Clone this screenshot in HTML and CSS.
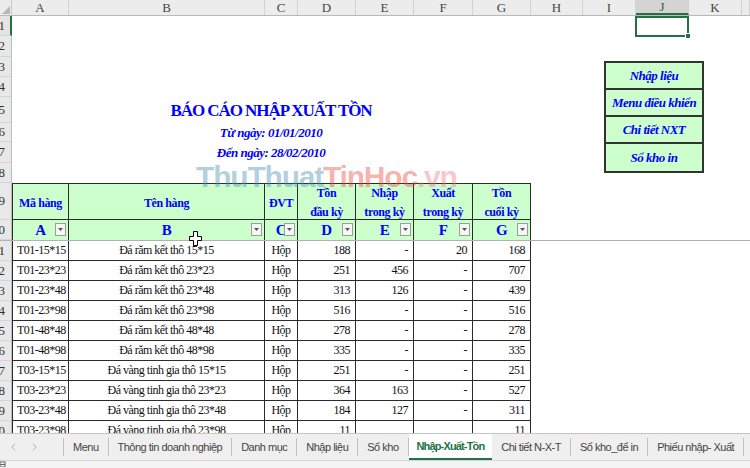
FILE: index.html
```html
<!DOCTYPE html>
<html lang="vi">
<head>
<meta charset="utf-8">
<title>Nhập-Xuất-Tồn</title>
<link rel="stylesheet" href="styles.css">
</head>
<body>
<div class="app">
  <div class="colhdr">
    <div class="corner"><svg width="8" height="8" viewBox="0 0 8 8"><polygon points="8,0 8,8 0,8" fill="#b5b5b5"/></svg></div>
    <div class="ch">A</div><div class="ch">B</div><div class="ch">C</div><div class="ch">D</div><div class="ch">E</div><div class="ch">F</div><div class="ch">G</div><div class="ch">H</div><div class="ch">I</div><div class="ch on">J</div><div class="ch">K</div><div class="ch"></div>
  </div>

  <div class="sheet">
    <div class="row h20"><div class="rh cur"><span>1</span></div><div class="selcell"><span class="handle"></span></div></div>
    <div class="row h21"><div class="rh"><span>2</span></div></div>
    <div class="row h20"><div class="rh"><span>3</span></div></div>
    <div class="row h20"><div class="rh"><span>4</span></div></div>
    <div class="row h26"><div class="rh"><span>5</span></div><div class="title">BÁO CÁO NHẬP XUẤT TỒN</div></div>
    <div class="row h19"><div class="rh"><span>6</span></div><div class="date">Từ ngày: 01/01/2010</div></div>
    <div class="row h21"><div class="rh"><span>7</span></div><div class="date">Đến ngày: 28/02/2010</div></div>
    <div class="row h20"><div class="rh"><span>8</span></div></div>

    <div class="row h37">
      <div class="rh"><span>9</span></div>
      <div class="td th first">Mã hàng</div>
      <div class="td th">Tên hàng</div>
      <div class="td th">ĐVT</div>
      <div class="td th"><span class="ln">Tồn</span><span class="ln">đầu kỳ</span></div>
      <div class="td th"><span class="ln">Nhập</span><span class="ln">trong kỳ</span></div>
      <div class="td th"><span class="ln">Xuất</span><span class="ln">trong kỳ</span></div>
      <div class="td th"><span class="ln">Tồn</span><span class="ln">cuối kỳ</span></div>
    </div>

    <div class="row h21 freeze">
      <div class="rh"><span>10</span></div>
      <div class="td tf first">A<span class="fb"><svg width="5" height="3" viewBox="0 0 5 3"><polygon points="0,0 5,0 2.5,3" fill="#555"/></svg></span></div>
      <div class="td tf">B<span class="fb"><svg width="5" height="3" viewBox="0 0 5 3"><polygon points="0,0 5,0 2.5,3" fill="#555"/></svg></span></div>
      <div class="td tf">C<span class="fb"><svg width="5" height="3" viewBox="0 0 5 3"><polygon points="0,0 5,0 2.5,3" fill="#555"/></svg></span></div>
      <div class="td tf">D<span class="fb"><svg width="5" height="3" viewBox="0 0 5 3"><polygon points="0,0 5,0 2.5,3" fill="#555"/></svg></span></div>
      <div class="td tf">E<span class="fb"><svg width="5" height="3" viewBox="0 0 5 3"><polygon points="0,0 5,0 2.5,3" fill="#555"/></svg></span></div>
      <div class="td tf">F<span class="fb"><svg width="5" height="3" viewBox="0 0 5 3"><polygon points="0,0 5,0 2.5,3" fill="#555"/></svg></span></div>
      <div class="td tf">G<span class="fb"><svg width="5" height="3" viewBox="0 0 5 3"><polygon points="0,0 5,0 2.5,3" fill="#555"/></svg></span></div>
    </div>

    <div class="row h20"><div class="rh"><span>11</span></div><div class="td first l">T01-15*15</div><div class="td c">Đá răm kết thô 15*15</div><div class="td c">Hộp</div><div class="td r">188</div><div class="td r">-</div><div class="td r">20</div><div class="td r">168</div></div>
    <div class="row h20"><div class="rh"><span>12</span></div><div class="td first l">T01-23*23</div><div class="td c">Đá răm kết thô 23*23</div><div class="td c">Hộp</div><div class="td r">251</div><div class="td r">456</div><div class="td r">-</div><div class="td r">707</div></div>
    <div class="row h20"><div class="rh"><span>13</span></div><div class="td first l">T01-23*48</div><div class="td c">Đá răm kết thô 23*48</div><div class="td c">Hộp</div><div class="td r">313</div><div class="td r">126</div><div class="td r">-</div><div class="td r">439</div></div>
    <div class="row h20"><div class="rh"><span>14</span></div><div class="td first l">T01-23*98</div><div class="td c">Đá răm kết thô 23*98</div><div class="td c">Hộp</div><div class="td r">516</div><div class="td r">-</div><div class="td r">-</div><div class="td r">516</div></div>
    <div class="row h20"><div class="rh"><span>15</span></div><div class="td first l">T01-48*48</div><div class="td c">Đá răm kết thô 48*48</div><div class="td c">Hộp</div><div class="td r">278</div><div class="td r">-</div><div class="td r">-</div><div class="td r">278</div></div>
    <div class="row h20"><div class="rh"><span>16</span></div><div class="td first l">T01-48*98</div><div class="td c">Đá răm kết thô 48*98</div><div class="td c">Hộp</div><div class="td r">335</div><div class="td r">-</div><div class="td r">-</div><div class="td r">335</div></div>
    <div class="row h20"><div class="rh"><span>17</span></div><div class="td first l">T03-15*15</div><div class="td c">Đá vàng tinh gia thô 15*15</div><div class="td c">Hộp</div><div class="td r">251</div><div class="td r">-</div><div class="td r">-</div><div class="td r">251</div></div>
    <div class="row h20"><div class="rh"><span>18</span></div><div class="td first l">T03-23*23</div><div class="td c">Đá vàng tinh gia thô 23*23</div><div class="td c">Hộp</div><div class="td r">364</div><div class="td r">163</div><div class="td r">-</div><div class="td r">527</div></div>
    <div class="row h20"><div class="rh"><span>19</span></div><div class="td first l">T03-23*48</div><div class="td c">Đá vàng tinh gia thô 23*48</div><div class="td c">Hộp</div><div class="td r">184</div><div class="td r">127</div><div class="td r">-</div><div class="td r">311</div></div>
    <div class="row h20"><div class="rh"><span>20</span></div><div class="td first l">T03-23*98</div><div class="td c">Đá vàng tinh gia thô 23*98</div><div class="td c">Hộp</div><div class="td r">11</div><div class="td r"></div><div class="td r"></div><div class="td r">11</div></div>
  </div>

  <div class="tabbar">
    <div class="nav">
      <svg width="5" height="8" viewBox="0 0 5 8"><polyline points="4,0.5 1,4 4,7.5" fill="none" stroke="#b3b3b3" stroke-width="1"/></svg>
      <svg width="5" height="8" viewBox="0 0 5 8"><polyline points="1,0.5 4,4 1,7.5" fill="none" stroke="#b3b3b3" stroke-width="1"/></svg>
    </div>
    <span class="sep"></span>
    <div class="tab">Menu</div><span class="sep"></span>
    <div class="tab">Thông tin doanh nghiệp</div><span class="sep"></span>
    <div class="tab">Danh mục</div><span class="sep"></span>
    <div class="tab">Nhập liệu</div><span class="sep"></span>
    <div class="tab">Sổ kho</div><span class="sep"></span>
    <div class="tab active"><span>Nhập-Xuất-Tồn</span></div>
    <div class="tab">Chi tiết N-X-T</div><span class="sep"></span>
    <div class="tab">Sổ kho_để in</div><span class="sep"></span>
    <div class="tab">Phiếu nhập- Xuất</div><span class="sep"></span>
  </div>
  <div class="status">
    <svg width="6" height="6" viewBox="0 0 6 6"><rect x="0" y="1" width="5" height="5" fill="none" stroke="#666" stroke-width="1"/><line x1="0" y1="3.5" x2="5" y2="3.5" stroke="#666"/></svg>
  </div>

  <div class="shapes">
    <div class="btn">Nhập liệu</div>
    <div class="btn">Menu điều khiển</div>
    <div class="btn">Chi tiết NXT</div>
    <div class="btn">Sổ kho in</div>
  </div>

  <div class="wm"><span class="wm1">ThuThuat</span><span class="wm2">TinHoc</span><span class="wm3">.vn</span></div>

  <svg class="cursor" width="13" height="15" viewBox="-0.5 -0.5 13 15"><polygon points="4,0 8,0 8,5 12,5 12,9 8,9 8,14 4,14 4,9 0,9 0,5 4,5" fill="#fff" stroke="#000" stroke-width="1"/></svg>
</div>
</body>
</html>
```

FILE: styles.css
```css
* { box-sizing: border-box; }
html, body { margin: 0; padding: 0; }
body {
  width: 750px;
  height: 468px;
  overflow: hidden;
  background: #fff;
  font-family: "Liberation Serif", "Times New Roman", serif;
}
.app {
  position: relative;
  width: 750px;
  height: 468px;
  display: flex;
  flex-direction: column;
  overflow: hidden;
}

/* grid columns: row header, A..K, partial L */
.colhdr, .row {
  display: grid;
  grid-template-columns: 12px 57px 196px 33px 58px 58px 59px 58px 52px 53px 53px 53px 8px;
}

.colhdr {
  flex: none;
  height: 16px;
  background: #ececec;
  border-bottom: 1px solid #b9b9b9;
}
.corner {
  border-right: 1px solid #c8c8c8;
  display: flex;
  align-items: flex-end;
  justify-content: flex-end;
  padding: 0 1px 1px 0;
}
.ch {
  display: flex;
  align-items: center;
  justify-content: center;
  font-size: 13px;
  line-height: 1;
  color: #444;
  border-right: 1px solid #d2d2d2;
}
.ch.on {
  background: #d4d4d4;
  color: #2f5f43;
  border-bottom: 2px solid #217346;
}

.sheet {
  flex: 1;
  overflow: hidden;
}
.h19 { height: 19px; }
.h20 { height: 20px; }
.h21 { height: 21px; }
.h26 { height: 26px; }
.h37 { height: 37px; }

.rh {
  grid-column: 1;
  background: #e8e8e8;
  border-right: 1px solid #bdbdbd;
  border-bottom: 1px solid #d4d4d4;
  display: flex;
  align-items: center;
  justify-content: flex-end;
  padding-right: 6px;
  overflow: hidden;
  white-space: nowrap;
  font-size: 13px;
  color: #333;
}
.rh span { flex: none; }
.rh.cur {
  background: #e4e4e4;
  border-right: 2px solid #217346;
  padding-right: 5px;
}

.selcell {
  grid-column: 11;
  position: relative;
  border: 2px solid #217346;
  margin: 0 0 -1px -1px;
}
.handle {
  position: absolute;
  right: -4px;
  bottom: -4px;
  width: 6px;
  height: 6px;
  background: #217346;
  border: 1px solid #fff;
}

.title {
  grid-column: 3 / 8;
  display: flex;
  align-items: center;
  justify-content: center;
  color: #0000ff;
  font-weight: bold;
  font-size: 17px;
  letter-spacing: -1.05px;
  padding-top: 2px;
}
.date {
  grid-column: 3 / 8;
  display: flex;
  align-items: center;
  justify-content: center;
  color: #0000ff;
  font-weight: bold;
  font-style: italic;
  font-size: 13px;
  letter-spacing: -0.5px;
}

/* table */
.td {
  display: flex;
  align-items: center;
  border-right: 1px solid #2b2b2b;
  border-bottom: 1px solid #2b2b2b;
  font-size: 12px;
  letter-spacing: -0.5px;
  color: #111;
  white-space: nowrap;
  overflow: hidden;
}
.td.first { border-left: 1px solid #2b2b2b; }
.l { padding-left: 4px; }
.c { justify-content: center; }
.r { justify-content: flex-end; padding-right: 5px; }

.th {
  background: #ccffcc;
  border-top: 1px solid #2b2b2b;
  color: #0000ff;
  font-weight: bold;
  font-size: 12px;
  letter-spacing: -0.4px;
  flex-direction: column;
  justify-content: center;
  text-align: center;
  line-height: 14px;
  gap: 5px;
  padding-top: 2px;
}
.ln { display: block; }

.freeze { border-bottom: 1px solid #b2b2b2; }
.tf {
  position: relative;
  background: #ccffcc;
  border-bottom: none;
  color: #0000ff;
  font-weight: bold;
  font-size: 15px;
  justify-content: center;
  overflow: visible;
}
.fb {
  position: absolute;
  right: 2px;
  top: 3px;
  width: 11px;
  height: 13px;
  background: #f6f6f6;
  border: 1px solid #9c9c9c;
  display: flex;
  align-items: center;
  justify-content: center;
}

/* sheet tabs */
.tabbar {
  flex: none;
  height: 27px;
  background: #efefef;
  border-top: 1px solid #c6c6c6;
  display: flex;
  align-items: stretch;
  font-family: "Liberation Sans", Arial, sans-serif;
  font-size: 11px;
  letter-spacing: -0.5px;
  color: #444;
  white-space: nowrap;
  overflow: hidden;
}
.nav {
  flex: none;
  width: 63px;
  display: flex;
  align-items: center;
  gap: 16px;
  padding-left: 11px;
}
.sep {
  flex: none;
  width: 1px;
  height: 18px;
  align-self: center;
  background: #c2c2c2;
}
.tab {
  flex: none;
  display: flex;
  align-items: center;
  padding: 0 9px 1px;
}
.tab.active {
  background: #fff;
  color: #217346;
  font-weight: bold;
  letter-spacing: -0.85px;
  padding: 0 8px;
  border-bottom: 2px solid #217346;
}
.status {
  flex: none;
  height: 8px;
  background: #f4f4f4;
  border-top: 1px solid #d6d6d6;
  display: flex;
  align-items: flex-start;
}

/* floating shapes over the sheet */
.shapes {
  position: absolute;
  left: 604px;
  top: 61px;
  width: 100px;
  display: flex;
  flex-direction: column;
  background: #ccffcc;
  border: 2px solid #333;
}
.btn {
  height: 27px;
  display: flex;
  align-items: center;
  justify-content: center;
  color: #0000ff;
  font-weight: bold;
  font-style: italic;
  font-size: 13px;
  letter-spacing: -0.5px;
  border-bottom: 2px solid #333;
}
.btn:last-child { border-bottom: none; }

.wm {
  position: absolute;
  left: 196px;
  top: 162px;
  font-family: "Liberation Sans", Arial, sans-serif;
  font-weight: bold;
  font-size: 30px;
  line-height: 1;
  letter-spacing: -1.2px;
  white-space: nowrap;
}
.wm1 { color: rgba(70, 140, 175, 0.42); }
.wm2 { color: rgba(235, 70, 60, 0.42); }
.wm3 { color: rgba(230, 110, 120, 0.38); }

.cursor {
  position: absolute;
  left: 189px;
  top: 231px;
}
```
